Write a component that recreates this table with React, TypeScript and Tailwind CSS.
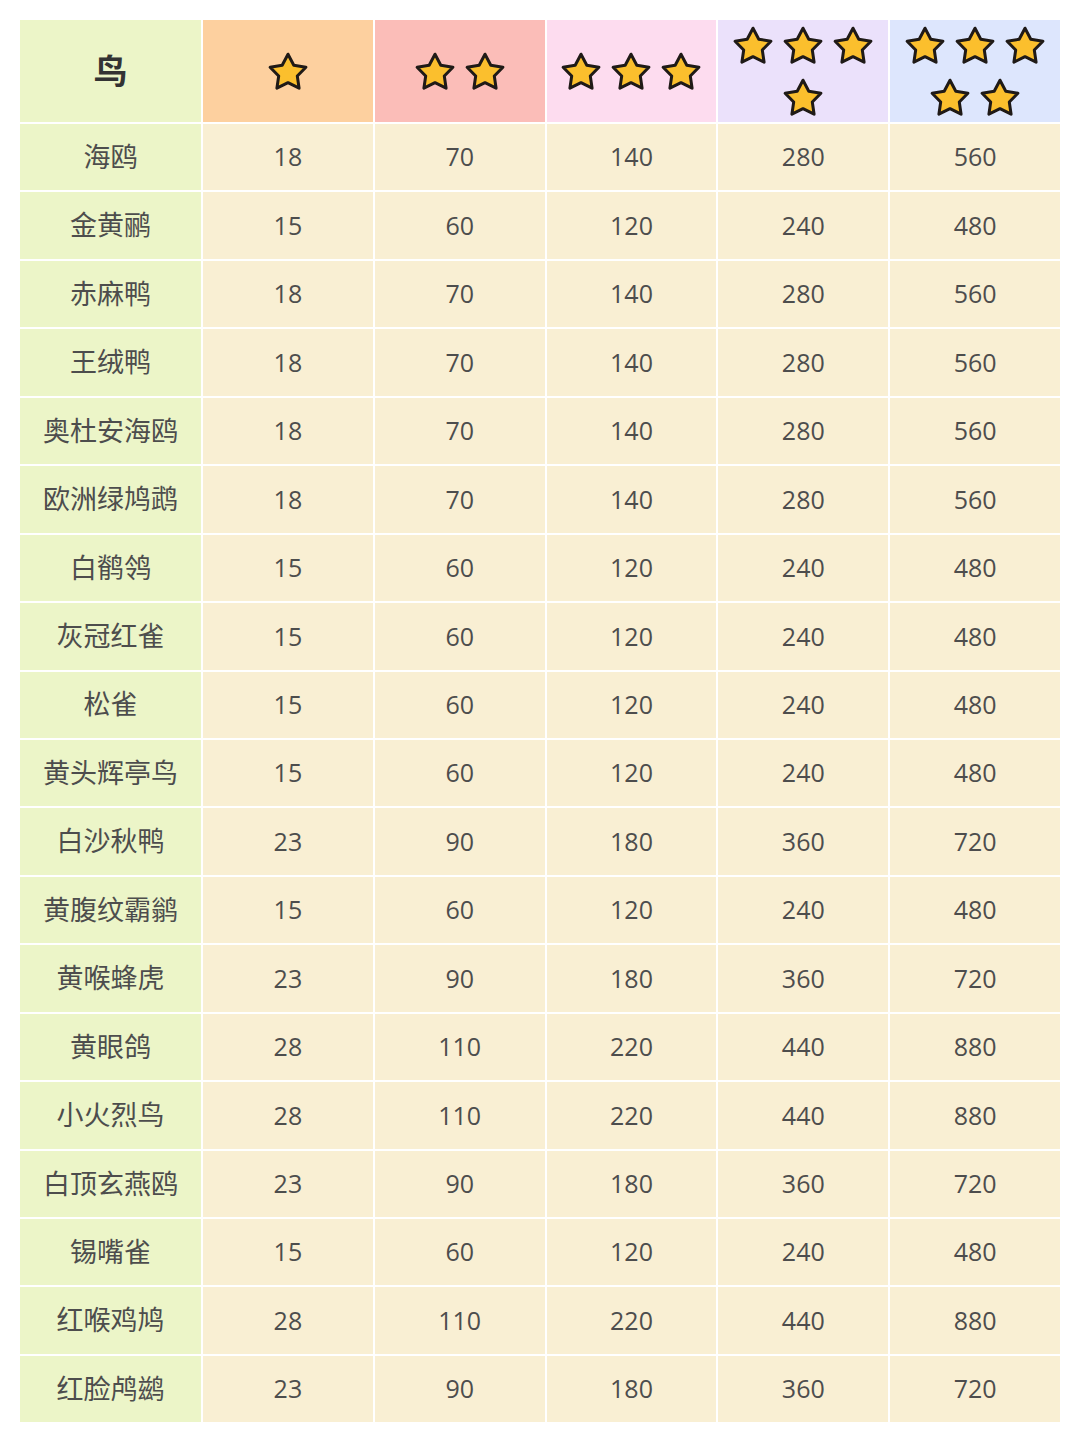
const rows: [string, number, number, number, number, number][] = [
  ["海鸥", 18, 70, 140, 280, 560],
  ["金黄鹂", 15, 60, 120, 240, 480],
  ["赤麻鸭", 18, 70, 140, 280, 560],
  ["王绒鸭", 18, 70, 140, 280, 560],
  ["奥杜安海鸥", 18, 70, 140, 280, 560],
  ["欧洲绿鸠鹉", 18, 70, 140, 280, 560],
  ["白鹡鸰", 15, 60, 120, 240, 480],
  ["灰冠红雀", 15, 60, 120, 240, 480],
  ["松雀", 15, 60, 120, 240, 480],
  ["黄头辉亭鸟", 15, 60, 120, 240, 480],
  ["白沙秋鸭", 23, 90, 180, 360, 720],
  ["黄腹纹霸鹟", 15, 60, 120, 240, 480],
  ["黄喉蜂虎", 23, 90, 180, 360, 720],
  ["黄眼鸽", 28, 110, 220, 440, 880],
  ["小火烈鸟", 28, 110, 220, 440, 880],
  ["白顶玄燕鸥", 23, 90, 180, 360, 720],
  ["锡嘴雀", 15, 60, 120, 240, 480],
  ["红喉鸡鸠", 28, 110, 220, 440, 880],
  ["红脸鸬鹚", 23, 90, 180, 360, 720],
];

function Star() {
  return (
    <svg width="40" height="39" viewBox="0 0 40 39" className="block overflow-visible">
      <path
        d="M20 2.2 L25.8 13.2 L37.9 15.2 L29.3 24 L31.1 36.2 L20 30.7 L8.9 36.2 L10.7 24 L2.1 15.2 L14.2 13.2 Z"
        fill="#fbbf2d"
        stroke="#1f1a17"
        strokeWidth="3"
        strokeLinejoin="round"
      />
    </svg>
  );
}

function Stars({ top, bottom = 0 }: { top: number; bottom?: number }) {
  return (
    <div className="flex flex-col items-center gap-[13px]">
      <div className="flex gap-[10px]">
        {Array.from({ length: top }).map((_, i) => (
          <Star key={i} />
        ))}
      </div>
      {bottom > 0 && (
        <div className="flex gap-[10px]">
          {Array.from({ length: bottom }).map((_, i) => (
            <Star key={i} />
          ))}
        </div>
      )}
    </div>
  );
}

const font = "font-['Open_Sans','Noto_Sans_CJK_SC',sans-serif]";

export default function App() {
  return (
    <div className={`w-[1080px] h-[1443px] bg-white pt-[20px] px-[20px] ${font}`}>
      <div className="grid grid-cols-[181px_repeat(5,1fr)] grid-rows-[102px_repeat(19,66.45px)] gap-[2px] w-[1040px]">
        <div className="bg-[#ecf5c8] flex items-center justify-center text-[34px] font-bold text-[#333]">
          鸟
        </div>
        <div className="bg-[#fdd09f] flex items-center justify-center">
          <Stars top={1} />
        </div>
        <div className="bg-[#fbbdb8] flex items-center justify-center">
          <Stars top={2} />
        </div>
        <div className="bg-[#fddcef] flex items-center justify-center">
          <Stars top={3} />
        </div>
        <div className="bg-[#ebe1fb] flex items-center justify-center">
          <Stars top={3} bottom={1} />
        </div>
        <div className="bg-[#dde6fd] flex items-center justify-center">
          <Stars top={3} bottom={2} />
        </div>
        {rows.map((r) => (
          <>
            <div
              key={r[0]}
              className="bg-[#ecf5c8] flex items-center justify-center text-[27px] text-[#4d4d4d]"
            >
              {r[0]}
            </div>
            {r.slice(1).map((v, i) => (
              <div
                key={r[0] + i}
                className="bg-[#f9efd3] flex items-center justify-center text-[25px] text-[#4d4d4d]"
              >
                {v}
              </div>
            ))}
          </>
        ))}
      </div>
    </div>
  );
}
